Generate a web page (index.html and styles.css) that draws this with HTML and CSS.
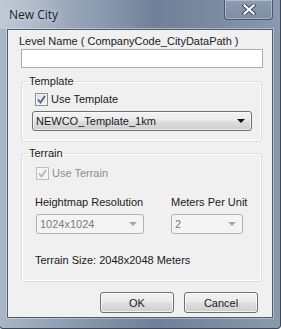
FILE: index.html
```html
<!DOCTYPE html>
<html lang="en">
<head>
  <meta charset="UTF-8" />
  <title>New City</title>
  <link rel="stylesheet" href="styles.css">
</head>
<body>
  <div class="window">
    <div class="titlebar">
      <span class="title">New City</span>
      <button class="close-btn" title="Close">
        <svg width="14" height="11" viewBox="0 0 14 11">
          <path d="M2.5 1.5 L11.5 9.5 M11.5 1.5 L2.5 9.5" stroke="#3c4656" stroke-width="4" stroke-linecap="square"/>
          <path d="M2.5 1.5 L11.5 9.5 M11.5 1.5 L2.5 9.5" stroke="#fff" stroke-width="2.2" stroke-linecap="square"/>
        </svg>
      </button>
    </div>

    <div class="client">
      <div class="field-label">Level Name ( CompanyCode_CityDataPath )</div>
      <input class="text-input" type="text" />

      <fieldset class="group template">
        <legend>Template</legend>
        <div class="check">
          <span class="box"><svg width="9" height="9" viewBox="0 0 9 9"><path d="M1 4.5 L3.5 7.5 L8 1" fill="none" stroke="#4a5f9b" stroke-width="1.8"/></svg></span>
          Use Template
        </div>
        <div class="combo wide">
          <span>NEWCO_Template_1km</span>
          <span class="arrow"></span>
        </div>
      </fieldset>

      <fieldset class="group terrain">
        <legend>Terrain</legend>
        <div class="check disabled">
          <span class="box"><svg width="9" height="9" viewBox="0 0 9 9"><path d="M1 4.5 L3.5 7.5 L8 1" fill="none" stroke="#b4b4b4" stroke-width="1.8"/></svg></span>
          Use Terrain
        </div>
        <div class="row">
          <div class="col res">
            <div class="lbl">Heightmap Resolution</div>
            <div class="combo disabled"><span>1024x1024</span><span class="arrow"></span></div>
          </div>
          <div class="col mpu">
            <div class="lbl">Meters Per Unit</div>
            <div class="combo disabled"><span>2</span><span class="arrow"></span></div>
          </div>
        </div>
        <div class="size">Terrain Size: 2048x2048 Meters</div>
      </fieldset>

      <div class="buttons">
        <button class="btn">OK</button>
        <button class="btn">Cancel</button>
      </div>
    </div>
  </div>
</body>
</html>
```

FILE: styles.css
```css
* {
  box-sizing: border-box;
}
body {
  margin: 0;
  padding: 0;
  font-family: "Liberation Sans", Arial, sans-serif;
  font-size: 11px;
  color: #1a1a1a;
  background: #fff;
}
.window {
  width: 282px;
  height: 329px;
  margin-left: -1px;
  display: flex;
  flex-direction: column;
  padding: 0 7px 10px 7px;
  border: 1px solid #3e4756;
  border-top: none;
  border-radius: 0 0 4px 4px;
  background: linear-gradient(90deg, #a9b6c7 0%, #8796ab 30%, #6f8098 55%, #7c8ca2 80%, #8a99ad 100%);
}
.titlebar {
  height: 29px;
  display: flex;
  align-items: flex-start;
  background: linear-gradient(90deg, rgba(200,210,222,0.7) 0%, rgba(170,182,198,0.4) 25%, rgba(110,126,150,0) 55%);
  margin: 0 -7px;
  padding: 0 7px 0 9px;
}
.title {
  font-family: "Open Sans", "Liberation Sans", sans-serif;
  font-size: 12px;
  line-height: 16px;
  margin-top: 7px;
  color: #1c1c24;
  text-shadow: 0 0 6px rgba(230,236,244,0.9);
}
.close-btn {
  margin-left: auto;
  width: 49px;
  height: 20px;
  padding: 0;
  display: flex;
  align-items: center;
  justify-content: center;
  border: 1px solid #4b5667;
  border-top: none;
  border-radius: 0 0 4px 4px;
  background: linear-gradient(#8d9bb0, #7e8da4);
  box-shadow: inset 0 0 0 1px rgba(220,228,238,0.45);
}
.client {
  flex: 1;
  background: #f0f0f0;
  border: 1px solid #4f5d6f;
  box-shadow: 0 0 0 1px rgba(220,226,234,0.5);
  padding: 4px 14px 0 11px;
  display: flex;
  flex-direction: column;
}
.field-label {
  line-height: 14px;
  height: 14px;
  white-space: nowrap;
}
.text-input {
  margin: 1px 0 0 2px;
  width: 242px;
  height: 19px;
  border: 1px solid #abadb3;
  background: #fff;
  outline: none;
}
.group {
  margin: 6px 0 0 2px;
  width: 241px;
  border: 1px solid #d5dfe5;
  border-radius: 3px;
  box-shadow: inset 0 0 0 1px #fff;
  padding: 0 0 0 10px;
  min-width: 0;
}
.group legend {
  padding: 0 2px;
  margin-left: -5px;
  line-height: 14px;
}
.check {
  display: flex;
  align-items: center;
  line-height: 14px;
  height: 14px;
  gap: 3px;
  padding-left: 3px;
}
.check .box {
  width: 13px;
  height: 13px;
  border: 1px solid #8e8f8f;
  background: linear-gradient(135deg, #dcdee2, #f6f6f6);
  box-shadow: inset 0 0 0 1px #f4f4f4;
  display: flex;
  align-items: center;
  justify-content: center;
}
.check.disabled {
  color: #8d8d8d;
  padding-left: 4px;
}
.check.disabled .box {
  border-color: #bcbcbc;
  background: #f4f4f4;
}
.template .check {
  margin-top: 4px;
}
.combo {
  height: 20px;
  display: flex;
  align-items: center;
  justify-content: space-between;
  padding: 0 6px 0 3px;
  border: 1px solid #707070;
  border-radius: 3px;
  background: linear-gradient(#f2f2f2 0%, #ebebeb 45%, #dddddd 55%, #cfcfcf 100%);
  box-shadow: inset 0 0 0 1px rgba(255,255,255,0.6);
}
.combo.wide {
  margin: 5px 0 10px 0;
  width: 220px;
}
.arrow {
  width: 0;
  height: 0;
  border-left: 4px solid transparent;
  border-right: 4px solid transparent;
  border-top: 4px solid #111;
}
.combo.disabled {
  color: #7a7a7a;
  border-color: #adb2b5;
  background: #f4f4f4;
  box-shadow: none;
}
.combo.disabled .arrow {
  border-top-color: #a5a5a5;
}
.terrain {
  margin-top: 4px;
  padding-bottom: 14px;
}
.terrain .check {
  margin-top: 6px;
}
.row {
  display: flex;
  margin-top: 15px;
  padding-left: 3px;
}
.col .lbl {
  line-height: 14px;
  height: 14px;
  white-space: nowrap;
}
.col .combo {
  margin-top: 5px;
}
.res {
  width: 136px;
}
.res .combo {
  width: 108px;
  margin-left: 1px;
}
.mpu .combo {
  width: 72px;
}
.size {
  margin-top: 19px;
  padding-left: 3px;
  line-height: 14px;
}
.buttons {
  display: flex;
  justify-content: flex-end;
  gap: 10px;
  margin-top: 10px;
}
.btn {
  width: 74px;
  height: 21px;
  padding: 0;
  font-family: inherit;
  font-size: 11px;
  color: #1a1a1a;
  border: 1px solid #707070;
  border-radius: 3px;
  background: linear-gradient(#f2f2f2 0%, #ebebeb 45%, #dddddd 55%, #cfcfcf 100%);
  box-shadow: inset 0 0 0 1px rgba(255,255,255,0.7);
}
```
